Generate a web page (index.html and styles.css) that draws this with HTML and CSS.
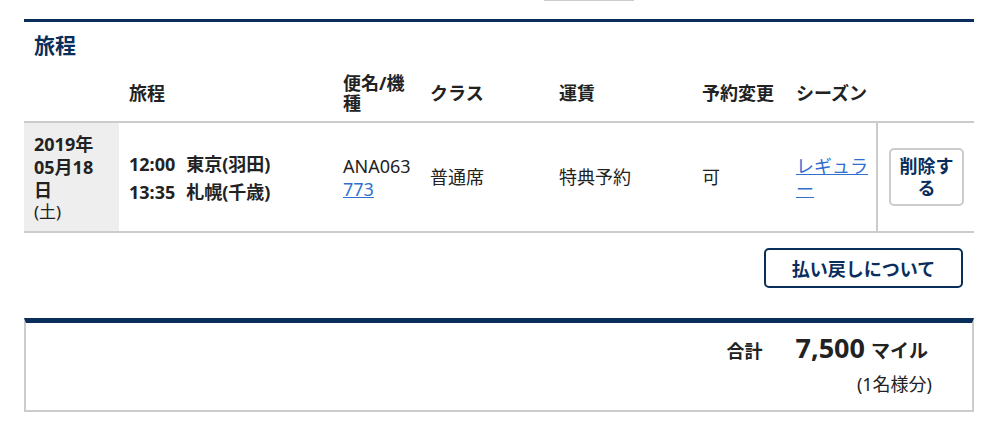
FILE: index.html
```html
<!DOCTYPE html>
<html lang="ja">

<head>
  <meta charset="UTF-8">
  <meta name="viewport" content="width=device-width, initial-scale=1.0">
  <title>予約内容の確認</title>
  <link rel="stylesheet" href="styles.css">
</head>

<body>
  <div class="page">
    <div class="tab-line"></div>

    <!-- Itinerary -->
    <section class="itinerary">
      <h2 class="section-title">旅程</h2>
      <table class="trip-table">
        <colgroup>
          <col class="col-date">
          <col class="col-route">
          <col class="col-flight">
          <col class="col-class">
          <col class="col-fare">
          <col class="col-change">
          <col class="col-season">
          <col class="col-action">
        </colgroup>
        <thead>
          <tr>
            <th></th>
            <th>旅程</th>
            <th>便名/機種</th>
            <th>クラス</th>
            <th>運賃</th>
            <th>予約変更</th>
            <th>シーズン</th>
            <th></th>
          </tr>
        </thead>
        <tbody>
          <tr>
            <td class="date">
              <span class="date-main">2019年05月18日</span>
              <span class="weekday">(土)</span>
            </td>
            <td class="route">
              <div class="leg"><span class="time">12:00</span>東京(羽田)</div>
              <div class="leg"><span class="time">13:35</span>札幌(千歳)</div>
            </td>
            <td>ANA063<br><a href="#">773</a></td>
            <td>普通席</td>
            <td>特典予約</td>
            <td>可</td>
            <td class="season"><a href="#">レギュラー</a></td>
            <td class="action"><button type="button" class="btn-delete">削除する</button></td>
          </tr>
        </tbody>
      </table>
      <div class="refund">
        <button type="button" class="btn-refund">払い戻しについて</button>
      </div>
    </section>

    <!-- Total -->
    <section class="total">
      <div class="total-row">
        <span class="total-label">合計</span>
        <span class="total-amount">7,500</span>
        <span class="total-unit">マイル</span>
      </div>
      <p class="total-note">(1名様分)</p>
    </section>
  </div>
</body>

</html>
```

FILE: styles.css
```css
/* Reset styles */
* {
  margin: 0;
  padding: 0;
  box-sizing: border-box;
}

body {
  font-family: "Noto Sans", "Noto Sans CJK JP", sans-serif;
  font-size: 18px;
  background-color: #fff;
  color: #222;
}

a {
  color: #2f6fd0;
}

.page {
  width: 950px;
  margin-left: 24px;
}

.tab-line {
  width: 90px;
  height: 1px;
  margin-left: 520px;
  background-color: #ccc;
}

/* Itinerary */
.itinerary {
  margin-top: 18px;
  border-top: 3px solid #0a2e5c;
}

.section-title {
  padding: 10px 10px 0;
  font-size: 21px;
  line-height: 26px;
  color: #0a2e5c;
}

.trip-table {
  width: 100%;
  table-layout: fixed;
  border-collapse: separate;
  border-spacing: 0;
}

.col-date { width: 95px; }
.col-route { width: 214px; }
.col-flight { width: 87px; }
.col-class { width: 129px; }
.col-fare { width: 143px; }
.col-change { width: 94px; }
.col-season { width: 90px; }
.col-action { width: 98px; }

.trip-table th {
  padding: 15px 6px 8px 10px;
  text-align: left;
  line-height: 20px;
  vertical-align: middle;
  border-bottom: 2px solid #ccc;
}

.trip-table td {
  padding: 10px 6px 9px 10px;
  line-height: 23px;
  vertical-align: middle;
  border-bottom: 2px solid #ccc;
}

.trip-table td.date {
  padding-right: 10px;
  vertical-align: top;
  font-weight: bold;
  background-color: #eee;
}

.weekday {
  display: block;
  font-size: 17px;
  line-height: 20px;
  font-weight: normal;
}

.route {
  font-weight: bold;
}

.leg {
  line-height: 28px;
}

.time {
  margin-right: 11px;
}

.season {
  line-break: loose;
}

.trip-table td.action {
  padding: 0 10px 0 11px;
  border-left: 2px solid #ccc;
}

.btn-delete {
  display: block;
  width: 75px;
  padding: 5px 4px;
  border: 2px solid #ccc;
  border-radius: 5px;
  background-color: #fff;
  color: #0a2e5c;
  font-family: inherit;
  font-size: 18px;
  font-weight: bold;
  line-height: 22px;
  cursor: pointer;
}

.refund {
  display: flex;
  justify-content: flex-end;
  padding: 15px 11px 0 0;
}

.btn-refund {
  width: 199px;
  height: 40px;
  border: 2px solid #0a2e5c;
  border-radius: 5px;
  background-color: #fff;
  color: #0a2e5c;
  font-family: inherit;
  font-size: 18px;
  font-weight: bold;
  cursor: pointer;
}

/* Total */
.total {
  margin-top: 30px;
  padding: 10px 40px 16px 0;
  border: 2px solid #ccc;
  border-top: 5px solid #0a2e5c;
  text-align: right;
}

.total-row {
  display: flex;
  justify-content: flex-end;
  align-items: baseline;
  padding-right: 4px;
  font-weight: bold;
}

.total-label {
  margin-right: 33px;
}

.total-amount {
  font-size: 27px;
  line-height: 30px;
}

.total-unit {
  margin-left: 6px;
  font-size: 19px;
}

.total-note {
  margin-top: 10px;
  font-size: 18px;
  line-height: 20px;
}
```
